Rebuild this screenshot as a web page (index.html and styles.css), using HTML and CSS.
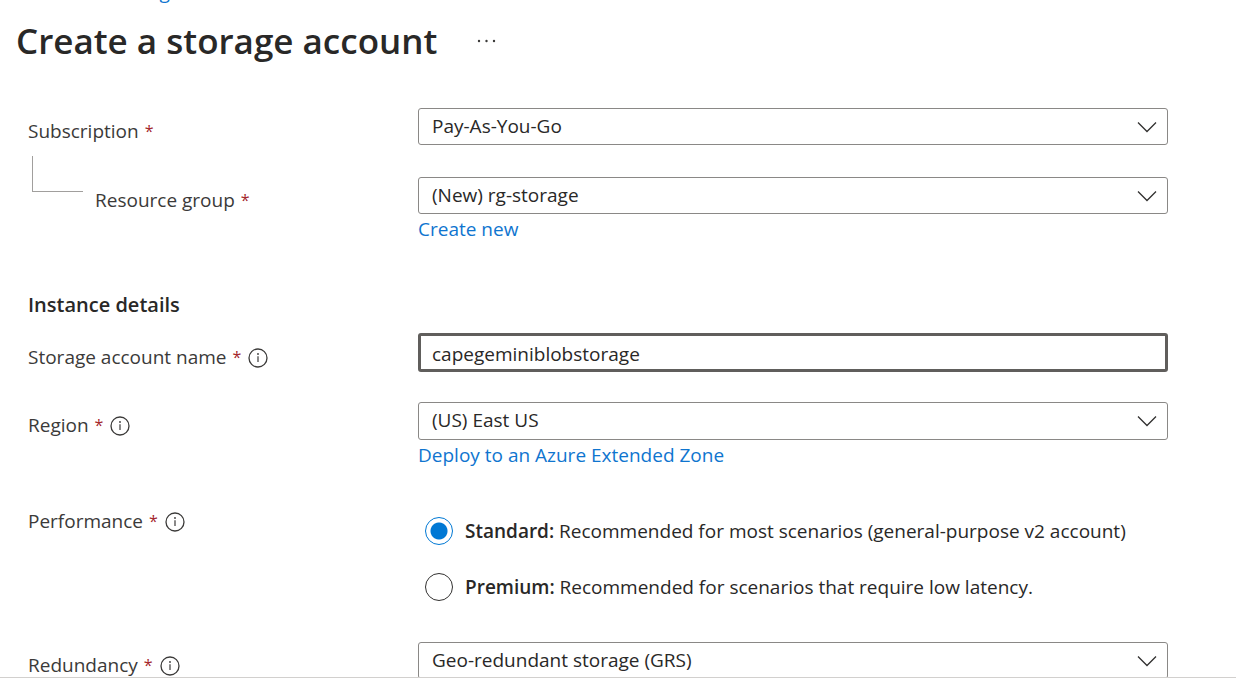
FILE: index.html
```
<!DOCTYPE html>
<html lang="en">
<head>
<meta charset="utf-8">
<title>Create a storage account</title>
<link rel="stylesheet" href="styles.css">
</head>
<body>
<svg class="defs" aria-hidden="true">
  <symbol id="chevron" viewBox="0 0 20 12"><path d="M1 1.500 10 10.500 19 1.500" fill="none" stroke="currentColor" stroke-width="1.300"/></symbol>
  <symbol id="info" viewBox="0 0 20 20"><circle cx="10" cy="10" r="9" fill="none" stroke="currentColor" stroke-width="1.300"/><path d="M10 8.200V14" stroke="currentColor" stroke-width="1.200"/><circle cx="10" cy="6" r=".9" fill="currentColor"/></symbol>
</svg>
<div class="blade">
  <nav class="breadcrumb" aria-label="Breadcrumb"><a href="#">Home</a><span>&gt;</span><a href="#">Storage accounts</a></nav>
  <header class="title-bar">
    <h1>Create a storage account</h1>
    <button class="more" type="button" aria-label="More actions"><svg viewBox="0 0 20 4"><circle cx="2" cy="2" r="1.200"/><circle cx="9.500" cy="2" r="1.200"/><circle cx="17" cy="2" r="1.200"/></svg></button>
  </header>
  <form class="form">
    <div class="row">
      <div class="label"><label for="subscription">Subscription</label><span class="req">*</span></div>
      <div class="field">
        <div class="select"><select id="subscription"><option>Pay-As-You-Go</option></select><svg><use href="#chevron"/></svg></div>
      </div>
    </div>
    <div class="row row-group">
      <div class="label"><span class="branch"></span><label for="group">Resource group</label><span class="req">*</span></div>
      <div class="field">
        <div class="select"><select id="group"><option>(New) rg-storage</option></select><svg><use href="#chevron"/></svg></div>
        <a class="link" href="#">Create new</a>
      </div>
    </div>
    <h2>Instance details</h2>
    <div class="row row-name">
      <div class="label"><label for="name">Storage account name</label><span class="req">*</span><svg class="info"><use href="#info"/></svg></div>
      <div class="field"><input class="text" id="name" type="text" value="capegeminiblobstorage"></div>
    </div>
    <div class="row row-region">
      <div class="label"><label for="region">Region</label><span class="req">*</span><svg class="info"><use href="#info"/></svg></div>
      <div class="field">
        <div class="select"><select id="region"><option>(US) East US</option></select><svg><use href="#chevron"/></svg></div>
        <a class="link" href="#">Deploy to an Azure Extended Zone</a>
      </div>
    </div>
    <div class="row row-performance">
      <div class="label"><span id="performance">Performance</span><span class="req">*</span><svg class="info"><use href="#info"/></svg></div>
      <div class="field radios" role="radiogroup" aria-labelledby="performance">
        <label class="radio"><input type="radio" name="performance" checked><span><b>Standard:</b> Recommended for most scenarios (general-purpose v2 account)</span></label>
        <label class="radio"><input type="radio" name="performance"><span><b>Premium:</b> Recommended for scenarios that require low latency.</span></label>
      </div>
    </div>
    <div class="row">
      <div class="label"><label for="redundancy">Redundancy</label><span class="req">*</span><svg class="info"><use href="#info"/></svg></div>
      <div class="field">
        <div class="select"><select id="redundancy"><option>Geo-redundant storage (GRS)</option></select><svg><use href="#chevron"/></svg></div>
      </div>
    </div>
  </form>
</div>
</body>
</html>
```
FILE: styles.css
```
* { box-sizing: border-box; }
body {
  margin: 0;
  background: #fff;
  color: #292827;
  font-family: "Open Sans", "Noto Sans", sans-serif;
  font-size: 19px;
  line-height: 28px;
}
.defs { position: absolute; width: 0; height: 0; }
.blade {
  display: flex;
  flex-direction: column;
  height: 100vh;
  overflow: hidden;
  border-bottom: 1px solid #d2d0ce;
}
a { color: #0f75cf; text-decoration: none; }
.breadcrumb {
  display: flex;
  flex: none;
  align-items: flex-end;
  gap: 16px;
  height: 6px;
  padding-left: 16px;
  overflow: hidden;
}
.title-bar {
  display: flex;
  flex: none;
  align-items: center;
  gap: 40px;
  height: 70px;
  padding-left: 16px;
}
h1 { margin: 0; font-size: 35px; font-weight: 600; line-height: 48px; }
.more { padding: 0; border: 0; background: none; line-height: 0; }
.more svg { width: 20px; height: 4px; fill: #3b3a39; }
.form { flex: none; padding: 32px 68px 32px 28px; }
.row { display: grid; grid-template-columns: 390px 1fr; margin-bottom: 32px; }
.label { display: flex; align-items: flex-start; padding-top: 9px; color: #3b3a39; }
.req { margin-left: 6px; color: #a4262c; font-size: 16px; }
.info { width: 20px; height: 20px; margin: 5px 0 0 7px; }
.branch {
  width: 51px;
  height: 36px;
  margin: -30px 12px 0 4px;
  border: solid #a19f9d;
  border-width: 0 0 1px 1px;
}
.field { min-width: 0; }
.select { display: grid; align-items: center; }
.select select, .select svg { grid-area: 1 / 1; }
.select svg { justify-self: end; width: 20px; height: 12px; margin-right: 11px; pointer-events: none; color: #323130; }
select, .text {
  width: 100%;
  border: 1px solid #8a8886;
  border-radius: 3px;
  background: #fff;
  color: inherit;
  font: inherit;
}
select { height: 37px; padding: 0 40px 2px 13px; appearance: none; }
.text { display: block; height: 39px; padding: 2px 11px 0; border: 3px solid #605e5c; outline: 0; }
.link { display: block; width: fit-content; line-height: 30px; }
.row-group { margin-bottom: 0; }
h2 { margin: 47px 0 14px; font-size: 20px; font-weight: 600; line-height: 28px; }
.row-name { margin-bottom: 30px; }
.row-name .label { padding-top: 10px; }
.row-region { margin-bottom: 28px; }
.row-region select { height: 38px; }
.row-performance { margin-bottom: 41px; }
.radios { display: grid; gap: 28px; padding: 19px 0 0 7px; }
.radio { display: flex; align-items: center; gap: 12px; }
.radio b { font-weight: 600; }
.radio input {
  flex: none;
  width: 28px;
  height: 28px;
  margin: 0;
  border: 1px solid #323130;
  border-radius: 50%;
  appearance: none;
}
.radio input:checked {
  border-color: #0078d4;
  background: radial-gradient(circle, #0078d4 8px, #fff 9px);
}
```
